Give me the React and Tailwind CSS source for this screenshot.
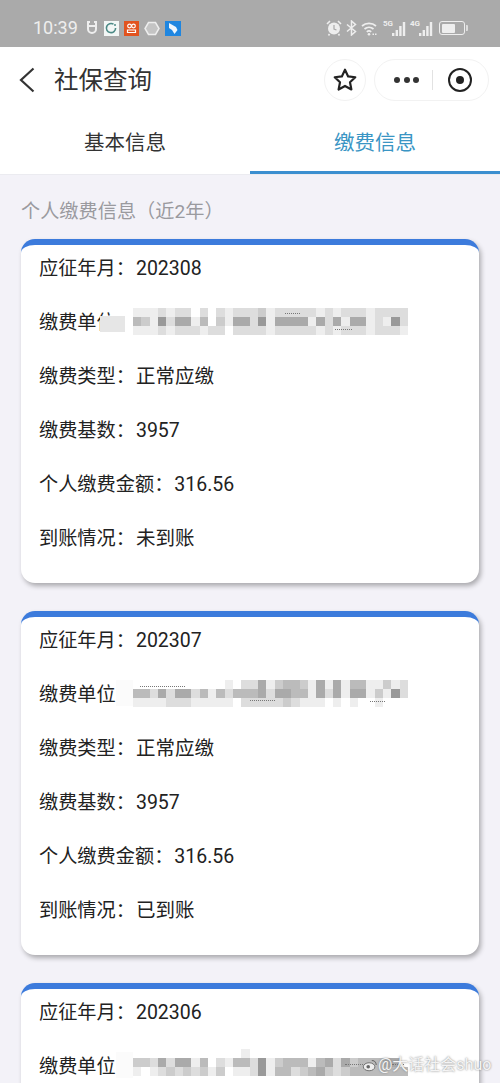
// each character is one mosaic cell; 'a' -> #aaaaaa and so on
const gray = (c) => `#${c}${c}${c}`

const cards = [
  {
    month: '202308',
    status: '未到账',
    offset: 'top-[12px]',
    blur: ['eeededdfdfdedddcedddddededddedddd', 'bce9daaebfceaad9eaaaaeadaeaaede9d', 'eeededddeddfddddedddddededddeddde'],
    specks: ['left-[246px] top-[17px] w-[15px]', 'left-[296px] top-[33px] w-[17px]'],
  },
  {
    month: '202307',
    status: '已到账',
    offset: 'top-[12px]',
    blur: ['fffffffffffefddaecbbceaeaebbeeced', 'bbdadaadbebdbbbadaabbeadaeaaece9d', 'eeeedddeeeeefdddddcdeeefefeffefff'],
    specks: ['left-[101px] top-[18px] w-[45px]', 'left-[211px] top-[32px] w-[25px]', 'left-[331px] top-[33px] w-[15px]'],
  },
  {
    month: '202306',
    offset: 'top-[9px]',
    blur: ['fffffffffffffefffffffffffffffffff', 'ccdadaaebfdebbd9ecbbbebadacbbbaaf', 'efedcdcdcecfeed9ebbdcbacdcbbbbbbb'],
    specks: ['left-[306px] top-[24px] w-[26px]', 'left-[353px] top-[24px] w-[12px]'],
  },
]

function Mosaic({ rows, offset }) {
  return (
    <div className={`absolute left-[94px] ${offset} flex flex-col`}>
      {rows.map((row, i) => (
        <div key={i} className="flex h-[9px]">
          {row.split('').map((c, j) => (
            <div key={j} className="w-[8.33px]" style={{ backgroundColor: gray(c) }} />
          ))}
        </div>
      ))}
    </div>
  )
}

function Row({ label, value }) {
  return (
    <div className="flex h-[28px] items-center text-[19.2px] leading-[28px] text-[#222]">
      <span>{label}：</span>
      <span className="ml-[1px] text-[19.5px]">{value}</span>
    </div>
  )
}

function RecordCard({ card, first }) {
  return (
    <div className="flex flex-col gap-[26px] rounded-[14px] border-t-[6px] border-[#3c7bdc] bg-white px-[18px] pt-[10px] pb-[30px] shadow-[2px_3px_5px_rgba(0,0,0,0.3)]">
      <Row label="应征年月" value={card.month} />
      <div className="relative h-[28px]">
        <Row label="缴费单位" value="" />
        <div className="absolute -top-[13px] left-0 h-[54px] w-[390px]">
          {first ? (
            <div className="absolute left-[61px] top-[20px] h-[16px] w-[25px] bg-[#e6e6e6]" />
          ) : (
            <div className="absolute left-[77px] top-[12px] h-[26px] w-[17px] bg-[#fbfbfb]" />
          )}
          <Mosaic rows={card.blur} offset={card.offset} />
          {card.specks.map((s) => (
            <div key={s} className={`absolute ${s} border-t-[1.5px] border-dotted border-[#777]`} />
          ))}
        </div>
      </div>
      {card.status && (
        <>
          <Row label="缴费类型" value="正常应缴" />
          <Row label="缴费基数" value="3957" />
          <Row label="个人缴费金额" value="316.56" />
          <Row label="到账情况" value={card.status} />
        </>
      )}
    </div>
  )
}

function StatusIcons() {
  return (
    <div className="flex items-center gap-[5px]">
      <svg width="12" height="14" viewBox="0 0 12 14" className="mr-[1px]">
        <path d="M2 1v7a4 4 0 0 0 8 0V1M1 1h3M8 1h3M2 5h8" fill="none" stroke="#eee" strokeWidth="2" />
      </svg>
      <div className="flex h-[15px] w-[15px] items-center justify-center bg-[#f2f6f5]">
        <svg width="12" height="12" viewBox="0 0 12 12">
          <path d="M8.5 2.2A4.6 4.6 0 1 0 10.6 6" fill="none" stroke="#4d8a86" strokeWidth="1.6" />
          <circle cx="10" cy="3" r="1" fill="#4d8a86" />
        </svg>
      </div>
      <div className="flex h-[15px] w-[15px] items-center justify-center bg-[#e2531f]">
        <svg width="11" height="11" viewBox="0 0 11 11">
          <circle cx="3.5" cy="3" r="1.8" fill="none" stroke="#fff" strokeWidth="1.2" />
          <circle cx="7.5" cy="3" r="1.8" fill="none" stroke="#fff" strokeWidth="1.2" />
          <path d="M1.5 7h8v2.5h-8z" fill="none" stroke="#fff" strokeWidth="1.2" />
        </svg>
      </div>
      <svg width="16" height="15" viewBox="0 0 16 15">
        <path d="M4.5 1.5h7L15 7.5l-3.500 6h-7L1 7.500z" fill="#c4c4c4" stroke="#eee" strokeWidth="1.500" />
      </svg>
      <div className="flex h-[15px] w-[16px] items-center justify-center bg-[#1f86e0]">
        <svg width="12" height="13" viewBox="0 0 12 13">
          <path d="M2 1l7 4 1.500 3-3 4L5 8 2 6z" fill="#eef6fd" />
        </svg>
      </div>
    </div>
  )
}

function Signal({ tag, bars }) {
  return (
    <div className="relative h-[15px] w-[23px]">
      <span className="absolute left-0 -top-[1px] text-[8px] font-bold leading-[8px] text-[#eee]">{tag}</span>
      <svg width="23" height="15" viewBox="0 0 23 15" className="absolute inset-0">
        {bars.map((h, i) => (
          <rect key={i} x={9 + i * 3.6} y={15 - h} width="2.400" height={h} fill="#eee" />
        ))}
      </svg>
    </div>
  )
}

function SystemIcons() {
  return (
    <div className="flex items-center gap-[4px]">
      <svg width="16" height="16" viewBox="0 0 16 16">
        <circle cx="8" cy="8.500" r="6" fill="#eee" />
        <path d="M1 4l3-3M15 4l-3-3M3.500 14l-1 1.500M12.500 14l1 1.500" stroke="#eee" strokeWidth="1.600" />
        <path d="M8 5v4l2.500 1" fill="none" stroke="#aaa" strokeWidth="1.200" />
      </svg>
      <svg width="11" height="16" viewBox="0 0 11 16">
        <path d="M1 4.500l8.500 7L5.500 15V1l4 3.500L1 11.500" fill="none" stroke="#eee" strokeWidth="1.500" />
      </svg>
      <svg width="18" height="15" viewBox="0 0 18 15">
        <path d="M1 5a10.500 10.500 0 0 1 14 0M3.500 8a6.800 6.800 0 0 1 9 0M5.800 10.800a3.300 3.300 0 0 1 4.400 0" fill="none" stroke="#eee" strokeWidth="1.700" />
        <circle cx="8" cy="13.200" r="1.300" fill="#eee" />
        <rect x="11.500" y="12.500" width="1.500" height="1.500" fill="#eee" />
        <rect x="14" y="12.500" width="1.500" height="1.500" fill="#eee" />
      </svg>
      <Signal tag="5G" bars={[3, 6, 10, 14]} />
      <Signal tag="4G" bars={[3, 6, 10, 14]} />
      <div className="ml-[2px] flex items-center">
        <div className="flex h-[14px] w-[26px] items-center rounded-[3px] border-[1.500px] border-[#eee] p-[1.500px]">
          <div className="h-full w-[13px] rounded-[1px] bg-[#eee]" />
        </div>
        <div className="ml-[1px] h-[6px] w-[2px] rounded-r-[1px] bg-[#ddd]" />
      </div>
    </div>
  )
}

export default function App() {
  return (
    <div className="relative h-[1083px] w-[500px] overflow-hidden bg-[#f3f2f8] font-['Roboto','Noto_Sans_CJK_SC',sans-serif]">
      <div className="flex h-[47px] items-center justify-between bg-[#aaaaaa] pl-[33px] pr-[32px] pt-[9px]">
        <div className="flex items-center gap-[8px]">
          <span className="text-[18px] leading-[20px] text-[#eee]">10:39</span>
          <StatusIcons />
        </div>
        <SystemIcons />
      </div>

      <div className="flex h-[65px] items-center bg-white pl-[19px] pr-[11px]">
        <svg width="16" height="26" viewBox="0 0 16 26" fill="none" stroke="#333" strokeWidth="2.200">
          <path d="M14.500 1.500L2 13l12.500 11.500" />
        </svg>
        <span className="ml-[19px] pt-[2px] text-[24.500px] leading-[32px] text-[#333]">社保查询</span>
        <div className="ml-auto flex items-center gap-[8px]">
          <div className="flex h-[42px] w-[42px] items-center justify-center rounded-full border border-[#f2f2f2]">
            <svg width="26" height="26" viewBox="0 0 24 24" fill="none" stroke="#222" strokeWidth="2" strokeLinejoin="round">
              <path d="M12 2.500l2.900 6.200 6.600.800-4.900 4.600 1.300 6.700L12 17.500l-5.900 3.300 1.300-6.700L2.500 9.500l6.600-.800z" />
            </svg>
          </div>
          <div className="flex h-[42px] w-[115px] items-center rounded-full border border-[#f2f2f2] pl-[19px]">
            <div className="flex gap-[3.500px]">
              <div className="h-[6px] w-[6px] rounded-full bg-[#333]" />
              <div className="h-[6px] w-[6px] rounded-full bg-[#333]" />
              <div className="h-[6px] w-[6px] rounded-full bg-[#333]" />
            </div>
            <div className="ml-[13px] h-[20px] w-px bg-[#e2e2e2]" />
            <div className="ml-[15px] flex h-[24px] w-[24px] items-center justify-center rounded-full border-[2.500px] border-[#222]">
              <div className="h-[8px] w-[8px] rounded-full bg-[#222]" />
            </div>
          </div>
        </div>
      </div>

      <div className="grid h-[63px] grid-cols-2 border-b border-[#ebebf0] bg-white text-[20.500px]">
        <div className="flex items-center justify-center pt-[1px] text-[#333]">基本信息</div>
        <div className="flex items-center justify-center border-b-[3px] border-[#3b8fd0] pt-[4px] text-[#3a95c4]">缴费信息</div>
      </div>

      <div className="px-[21px] pt-[23px] pb-[13px] text-[19.200px] leading-[28px] text-[#9a9a9f]">个人缴费信息（近2年）</div>

      <div className="flex flex-col gap-[28px] px-[21px]">
        {cards.map((card, i) => (
          <RecordCard key={card.month} card={card} first={i === 0} />
        ))}
      </div>

      {/* repost watermark, sits on top of the last card */}
      <div className="absolute left-[362px] top-[1054px] flex items-center text-[16px] leading-[22px] text-[#f4f4f4] [text-shadow:0_0_2px_#777]">
        <svg width="16" height="16" viewBox="0 0 18 16">
          <ellipse cx="8" cy="10" rx="6.500" ry="4.500" fill="#eee" stroke="#666" strokeWidth="1" />
          <circle cx="7" cy="10" r="2" fill="#666" />
          <path d="M11 3a5 5 0 0 1 5 5" fill="none" stroke="#666" strokeWidth="1.200" />
        </svg>
        <span>@大话社会shuo</span>
      </div>
    </div>
  )
}
